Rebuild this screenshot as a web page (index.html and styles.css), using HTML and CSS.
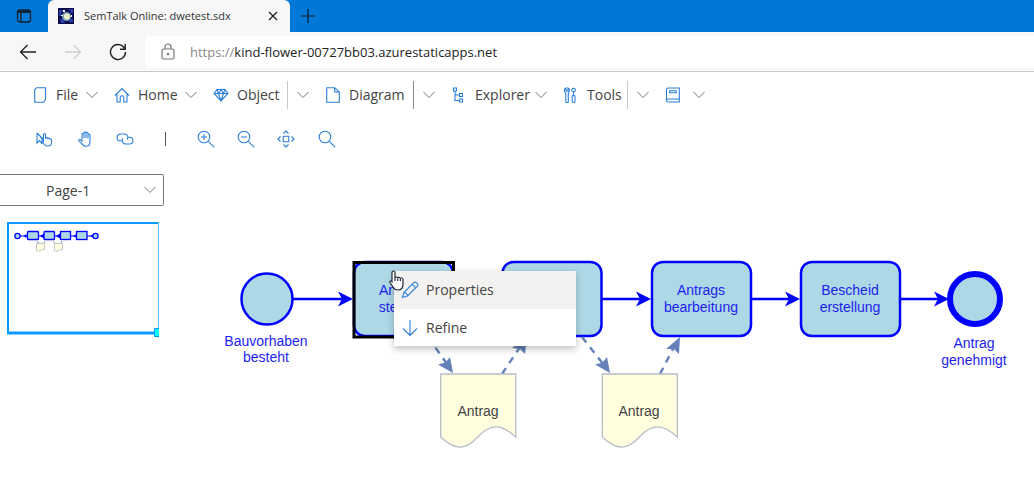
FILE: index.html
```html
<!DOCTYPE html>
<html lang="en">
<head>
<meta charset="utf-8">
<meta name="viewport" content="width=device-width, initial-scale=1">
<title>SemTalk Online: dwetest.sdx</title>
<link rel="stylesheet" href="styles.css">
</head>
<body>
<svg class="defs" aria-hidden="true">
  <symbol id="chevron" viewBox="0 0 12 12"><path d="M.5 3 6 8.500 11.500 3"/></symbol>
</svg>

<header class="browser">
  <div class="tabs">
    <button class="tab-menu" aria-label="Tab actions">
      <svg width="16" height="16" viewBox="0 0 16 16" fill="none" stroke="#10202e" stroke-width="1.300"><rect x="1.500" y="2" width="13" height="12" rx="2"/><path d="M2 4h12M5 5v9" /><path d="M2 3.500h12" stroke-width="2"/></svg>
    </button>
    <div class="tab">
      <svg width="16" height="16" viewBox="0 0 16 16"><path fill="#0b0d4a" d="M0 0h16v16H0z"/><path fill="#2a3fb0" d="M1 2h4v2H3v4H1zM11 1h4v4h-2zM2 11h3l2 4H3zM12 11h3v3h-4z"/><circle cx="8.500" cy="8.500" r="4.500" fill="#7d9fc0"/><circle cx="9" cy="8.500" r="3" fill="#e9efc4"/><path fill="#fff" d="M5 2h2v2H5zM13 7h1v2h-1zM3 7h2v1H3z"/></svg>
      <span class="tab-title">SemTalk Online: dwetest.sdx</span>
      <button class="tab-close" aria-label="Close tab">
        <svg width="10" height="10" viewBox="0 0 10 10" fill="none" stroke="#222" stroke-width="1.300"><path d="m1 1 8 8M9 1 1 9"/></svg>
      </button>
    </div>
    <button class="tab-new" aria-label="New tab">
      <svg width="14" height="14" viewBox="0 0 14 14" fill="none" stroke="#10202e" stroke-width="1.200"><path d="M7 0v14M0 7h14"/></svg>
    </button>
  </div>
  <div class="nav">
    <button aria-label="Back"><svg width="18" height="18" viewBox="0 0 18 18" fill="none" stroke="#222" stroke-width="1.300"><path d="M17 9H1.500M8.500 2l-7 7 7 7"/></svg></button>
    <button aria-label="Forward" disabled><svg width="18" height="18" viewBox="0 0 18 18" fill="none" stroke="#cfcfcf" stroke-width="1.300"><path d="M1 9h15.500M9.500 2l7 7-7 7"/></svg></button>
    <button aria-label="Refresh"><svg width="18" height="18" viewBox="0 0 18 18" fill="none" stroke="#222" stroke-width="1.400"><path d="M16.500 9A7.500 7.500 0 1 1 14.800 4.300L16 6M16.200 1v5.200H11"/></svg></button>
    <div class="address">
      <svg width="14" height="18" viewBox="0 0 14 18" fill="none" stroke="#777" stroke-width="1.200"><rect x="1" y="6" width="12" height="10" rx="1.500"/><path d="M4 6V4a3 3 0 0 1 6 0v2"/><circle cx="7" cy="11" r=".7" fill="#777"/></svg>
      <div class="url" role="textbox" aria-label="Address"><span>https://</span>kind-flower-00727bb03.azurestaticapps.net</div>
    </div>
  </div>
</header>

<nav class="menubar" aria-label="Main menu">
  <button class="menu-item"><svg class="icon" viewBox="0 0 16 16"><path d="M4.500.700h9v11.800l-2 2.800H2.700V2.500z"/></svg><span>File</span><svg class="chevron"><use href="#chevron"/></svg></button>
  <button class="menu-item"><svg class="icon" viewBox="0 0 16 16"><path d="M1 8.500 8 1.500l7 7M3 6.800V15h3.200v-4.500a1.800 1.800 0 0 1 3.600 0V15H13V6.800"/></svg><span>Home</span><svg class="chevron"><use href="#chevron"/></svg></button>
  <button class="menu-item"><svg class="icon" viewBox="0 0 16 16"><path d="M4 2.500h8l3 4-7 7.500-7-7.500zM1 6.500h14M4 2.500l1.500 4L8 14l2.500-7.500 1.500-4M5.500 6.500 8 2.500l2.500 4"/></svg><span>Object</span><svg class="chevron split"><use href="#chevron"/></svg></button>
  <button class="menu-item"><svg class="icon" viewBox="0 0 16 16"><path d="M1.700.700h8L14.300 5v10.300H1.700zM9.700.700V5h4.600"/></svg><span>Diagram</span><svg class="chevron split dark"><use href="#chevron"/></svg></button>
  <button class="menu-item"><svg class="icon" viewBox="0 0 16 16"><path d="M2.500 1h3v3h-3zM4 4v9.500h4.500M4 8h4.500M8.500 6.500h3v3h-3zM8.500 12h3v3h-3z"/></svg><span>Explorer</span><svg class="chevron"><use href="#chevron"/></svg></button>
  <button class="menu-item"><svg class="icon" viewBox="0 0 16 16"><path d="M3 1v3h2V1l1.300 1v2.500L5.300 6v8.500a1.200 1.200 0 0 1-2.500 0V6L1.500 4.500V2zM10.500 5v4M9.200 8.800h2.800v5.500a1.400 1.400 0 0 1-2.800 0z"/><circle cx="10.600" cy="3" r="1.800"/></svg><span>Tools</span><svg class="chevron split"><use href="#chevron"/></svg></button>
  <button class="menu-item" aria-label="Help"><svg class="icon" viewBox="0 0 16 16"><path d="M3.500 1h10.800v14H3.200a1.700 1.700 0 0 1-1.700-1.500V2.500A1.700 1.700 0 0 1 3.500 1zM14.300 12H3a1.500 1.500 0 0 0-1.500 1.500M4.700 3.800h6.600v2H4.700z"/></svg><svg class="chevron"><use href="#chevron"/></svg></button>
</nav>

<div class="toolbar" role="toolbar" aria-label="Drawing tools">
  <button aria-label="Select"><svg width="20" height="16" viewBox="0 0 20 16"><path d="M3 2v10l2.500-2.500L8 13M3 2l6 6M6 5l3 5M9.500 10V3.500a1 1 0 0 1 2 0V7l1-.5 1 1 1-.5 1.200 1 1-.2.800 1.200v2.500c0 2-1.500 3.500-3.500 3.500h-1.500C11 15 10 12.500 7.500 10.500c.5-1 1.500-.7 2-.2z"/></svg></button>
  <button aria-label="Pan"><svg width="16" height="16" viewBox="0 0 16 16"><path d="M5 10V3.200a1 1 0 0 1 2 0V7 1.700a1 1 0 0 1 2 0V7 2.200a1 1 0 0 1 2 0V7.500 4a1 1 0 0 1 2 0v7c0 2.500-1.500 4.300-4 4.300-2.800 0-3.700-1.500-4.500-3L1.700 9.800c-.3-1.200 1-1.700 1.800-.8z"/></svg></button>
  <button aria-label="Link"><svg width="18" height="16" viewBox="0 0 18 16"><path d="M6 9.800H4.500a3.400 3.400 0 0 1 0-6.800h4a3.400 3.400 0 0 1 2.600 5.600M12 6.200h1.500a3.400 3.400 0 0 1 0 6.800h-4a3.400 3.400 0 0 1-2.600-5.600"/></svg></button>
  <span class="bar" role="separator"></span>
  <button aria-label="Zoom in"><svg width="18" height="18" viewBox="0 0 18 18"><circle cx="7" cy="7" r="5.800"/><path d="m11.300 11.300 6 6M4 7h6M7 4v6"/></svg></button>
  <button aria-label="Zoom out"><svg width="18" height="18" viewBox="0 0 18 18"><circle cx="7" cy="7" r="5.800"/><path d="m11.300 11.300 6 6M4 7h6"/></svg></button>
  <button aria-label="Fit to window"><svg width="18" height="18" viewBox="0 0 18 18"><path d="M6.200 6.200h5.600v5.600H6.200zM6.500 3.500 9 1l2.500 2.500M6.500 14.500 9 17l2.500-2.500M3.500 6.500 1 9l2.500 2.500M14.500 6.500 17 9l-2.500 2.500"/></svg></button>
  <button aria-label="Search"><svg width="18" height="18" viewBox="0 0 18 18"><circle cx="7" cy="7" r="5.800"/><path d="m11.300 11.300 6 6"/></svg></button>
</div>

<main class="workspace">
  <aside class="sidebar">
    <div class="page-picker">
      <select aria-label="Page"><option>Page-1</option></select>
      <svg class="chevron"><use href="#chevron"/></svg>
    </div>
    <svg class="minimap" width="152" height="116" viewBox="7 221 152 116" role="img" aria-label="Diagram overview">
      <path d="M20 236h74" stroke="#00f"/>
      <path d="m23.500 236 3-2v4zM40 236l4-2.500v5zM56 236l4-2.500v5zM73 236l3-1.500v3zM90 236l2.500-1.500v3z" fill="#00f"/>
      <path d="m37 241 2 2M44 243l1-2M53 241l3 3M61 243l1-2" stroke="#8394bd"/>
      <g fill="#add8e6" stroke="#00f" stroke-width="1.300">
        <circle cx="17.500" cy="236" r="2.600"/><circle cx="95.500" cy="236" r="2.600"/>
        <rect x="27.500" y="231.500" width="11" height="8" rx="1"/><rect x="44" y="231.500" width="10.500" height="8" rx="1"/><rect x="60.500" y="231.500" width="10" height="8"/><rect x="76.500" y="231.500" width="10.500" height="8"/>
      </g>
      <path d="M36.500 243.500h8v6c-3-1-4 3-8 1zM54.500 243.500h8v6c-3-1-4 3-8 1z" fill="#ffffe0" stroke="#c4c4cc"/>
      <path d="M7 223h151.500" stroke="#0a9bfd" stroke-width="2"/>
      <path d="M8 222v112" stroke="#0a9bfd" stroke-width="2"/>
      <path d="M158.500 222v113" stroke="#5cbcfc"/>
      <path d="M7 333h152" stroke="#0a9bfd" stroke-width="3"/>
      <path d="M154.500 328.500h5v8h-5z" fill="#0ff" stroke="#0096f5"/>
    </svg>
  </aside>

  <section class="canvas" aria-label="Process diagram">
    <svg class="diagram" width="870" height="330" viewBox="164 160 870 330">
      <g fill="none" stroke="#00f" stroke-width="2.400">
        <path d="M292 299h53M602 299h42M751 299h42M900 299h42"/>
      </g>
      <g fill="#00f">
        <path d="M353 299l-15-7.500 4 7.500-4 7.500zM651 299l-15-7.500 4 7.500-4 7.500zM800 299l-15-7.500 4 7.500-4 7.500zM949 299l-15-7.500 4 7.500-4 7.500z"/>
      </g>
      <g fill="#add8e6" stroke="#00f" stroke-width="2.500">
        <circle cx="267" cy="299" r="25.500"/>
        <rect x="354" y="262" width="99" height="74" rx="11"/>
        <rect x="502.500" y="262" width="99" height="74" rx="11"/>
        <rect x="652" y="262" width="99" height="74" rx="11"/>
        <rect x="801" y="262" width="99" height="74" rx="11"/>
        <circle cx="975" cy="299" r="25" stroke-width="6"/>
      </g>
      <rect x="354" y="262.500" width="99.500" height="74.500" fill="none" stroke="#000" stroke-width="3"/>
      <g fill="none" stroke="#6482b9" stroke-width="2.400" stroke-dasharray="7 6">
        <path d="M428 337 447 364M502 374l24-36M582 337l22 28M660 374l16-31"/>
      </g>
      <g fill="#6482b9">
        <path d="m453 373-3-16-4.500 5.500-7.500 2zM527 337l-2 17-5-5-8-1zM610 373l-3-16-4.500 5.500-7.500 2zM680 337l-1 17-5-5-8 0z"/>
      </g>
      <g fill="#ffffe0" stroke="#b9bcc8" stroke-width="1.300">
        <path d="M440.700 374h75v63c-15-14-26-13-38 0s-22 14-37 0z"/>
        <path d="M602.300 374h75v63c-15-14-26-13-38 0s-22 14-37 0z"/>
      </g>
      <g class="caption">
        <text x="266" y="346">Bauvorhaben</text><text x="266" y="362">besteht</text>
        <text x="403" y="295">Antrags</text><text x="403" y="312">stellung</text>
        <text x="701" y="295">Antrags</text><text x="701" y="312">bearbeitung</text>
        <text x="850" y="295">Bescheid</text><text x="850" y="312">erstellung</text>
        <text x="974" y="348">Antrag</text><text x="974" y="365">genehmigt</text>
      </g>
      <g class="caption doc">
        <text x="478" y="416">Antrag</text><text x="639" y="416">Antrag</text>
      </g>
    </svg>

    <div class="context-menu" role="menu">
      <button role="menuitem" class="active"><svg width="18" height="18" viewBox="0 0 18 18"><path d="m1.500 16.500 1.500-5L12.700 1.700a2 2 0 0 1 2.700 0l.9.900a2 2 0 0 1 0 2.700L6.500 15zM11.200 3.200l3.600 3.600M3 11.500c1.500-.2 3.600 1.800 3.500 3.500"/></svg><span>Properties</span></button>
      <button role="menuitem"><svg width="18" height="18" viewBox="0 0 18 18"><path d="M9 1v15.500M2 9.500l7 7 7-7"/></svg><span>Refine</span></button>
    </div>
    <svg class="pointer" width="16" height="22" viewBox="0 0 16 22" aria-hidden="true"><path d="M3 2.500c0-2 3-2 3 0V8c0-1.500 2.700-1.300 2.700.3 0-1.400 2.700-1.200 2.700.5 0-1.300 2.600-1 2.600.8v4.700c0 3.500-2 5.700-5 5.700-2.500 0-4-1-5-3l-2.700-4C.3 11.300 2 10.300 3 11.500zM6 8v3M8.700 8.500V11M11.400 9v2" fill="#fff" stroke="#222a3a" stroke-width="1.200"/></svg>
  </section>
</main>
</body>
</html>
```
FILE: styles.css
```css
* { box-sizing: border-box; }

body {
  margin: 0;
  min-height: 100vh;
  display: flex;
  flex-direction: column;
  background: #fff;
  color: #444;
  font: 14px/20px "Segoe UI", "Open Sans", sans-serif;
  overflow-x: hidden;
}

button {
  display: flex;
  align-items: center;
  justify-content: center;
  padding: 0;
  border: 0;
  background: none;
  color: inherit;
  font: inherit;
}

svg { flex: none; }

.defs { position: absolute; width: 0; height: 0; }

/* Browser chrome */
.browser {
  background: #f7f7f7;
  border-bottom: 1px solid #c8c8c8;
}

.tabs {
  display: flex;
  height: 32px;
  background: #0078d7;
}

.tab-menu { width: 48px; }

.tab {
  display: flex;
  align-items: center;
  width: 242px;
  padding: 0 10px;
  gap: 10px;
  background: #f7f7f7;
  border-radius: 6px 6px 0 0;
}

.tab-title {
  flex: 1;
  color: #333;
  font-size: 11px;
  white-space: nowrap;
}

.tab-close { width: 14px; height: 16px; }

.tab-new { width: 36px; }

.nav {
  display: flex;
  align-items: center;
  height: 39px;
  padding-left: 5px;
}

.nav button { width: 45px; height: 32px; }

.address {
  flex: 1;
  display: flex;
  align-items: center;
  gap: 15px;
  height: 32px;
  margin-left: 5px;
  padding-left: 16px;
  background: #fff;
  border-radius: 4px 0 0 4px;
}

.url {
  color: #222;
  font-size: 13px;
  white-space: nowrap;
}

.url span { color: #888; }

/* Menus and tools */
.menubar {
  display: grid;
  grid-template-columns: 66px 83px 96px 110px 96px 86px 40px;
  column-gap: 16px;
  height: 46px;
  padding-left: 32px;
}

.menu-item span {
  flex: 1;
  padding-left: 8px;
  text-align: left;
}

.icon {
  width: 16px;
  height: 16px;
}

.icon,
.toolbar svg,
.context-menu svg {
  fill: none;
  stroke: #2b7fd6;
  stroke-width: 1.1px;
}

.chevron {
  width: 12px;
  height: 12px;
  margin-left: auto;
  fill: none;
  stroke: #777;
}

.split {
  box-sizing: content-box;
  height: 12px;
  padding: 8px 0 8px 9px;
  border-left: 1px solid #c8c8c8;
}

.dark { border-left-color: #888; }

.toolbar {
  display: grid;
  grid-template-columns: repeat(8, 1fr);
  align-items: center;
  width: 323px;
  height: 42px;
  margin-left: 24px;
}

.toolbar button { height: 32px; }

.bar {
  justify-self: center;
  width: 1px;
  height: 14px;
  background: #555;
}

/* Workspace */
.workspace {
  flex: 1;
  display: grid;
  grid-template-columns: 164px 1fr;
}

.sidebar {
  display: flex;
  flex-direction: column;
  gap: 15px;
  padding-top: 14px;
}

.page-picker {
  display: grid;
  align-items: center;
}

.page-picker > * { grid-area: 1 / 1; }

.page-picker select {
  width: 100%;
  height: 32px;
  padding: 2px 32px 0 46px;
  border: 1px solid #777;
  border-left: 0;
  border-radius: 0 2px 2px 0;
  background: #fff;
  color: #444;
  font: inherit;
  appearance: none;
}

.page-picker .chevron {
  justify-self: end;
  margin-right: 8px;
  pointer-events: none;
}

.minimap { margin-left: 7px; fill: none; }

.canvas {
  position: relative;
  overflow: hidden;
}

.diagram { display: block; }

.caption {
  fill: #1e1ef0;
  font: 14px "Liberation Sans", Arial, sans-serif;
  text-anchor: middle;
}

.doc { fill: #444; }

.context-menu {
  position: absolute;
  left: 230px;
  top: 111px;
  width: 182px;
  background: #fff;
  box-shadow: 0 3px 7px rgba(0, 0, 0, .25);
}

.context-menu button {
  width: 100%;
  height: 37px;
  justify-content: flex-start;
  gap: 7px;
  padding-left: 7px;
}

.context-menu .active {
  height: 38px;
  background: #f3f2f1;
}

.pointer {
  position: absolute;
  left: 225px;
  top: 110px;
}
```
